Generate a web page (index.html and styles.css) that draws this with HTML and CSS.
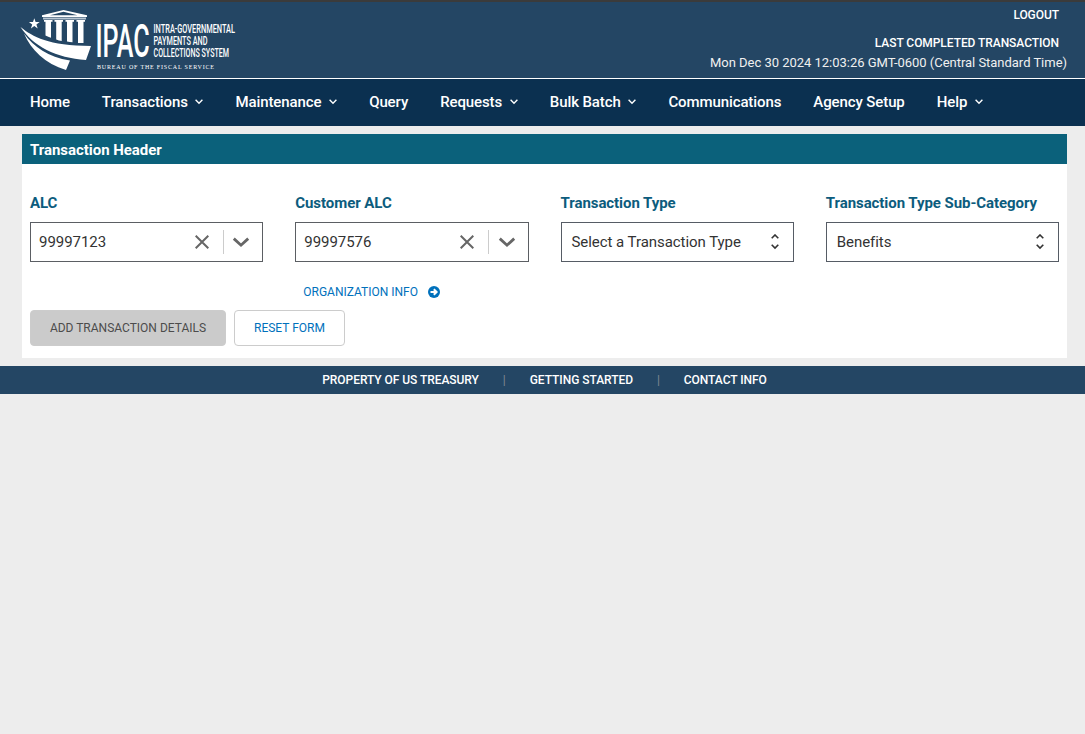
FILE: index.html
```html
<!DOCTYPE html>
<html lang="en">
<head>
<meta charset="utf-8">
<title>IPAC</title>
<link rel="stylesheet" href="styles.css">
</head>
<body>
<svg class="defs" width="0" height="0">
  <symbol id="caret" viewBox="0 0 8 6"><path d="M.6.8 4 4.2 7.4.8" fill="none" stroke="currentColor" stroke-width="1.4"/></symbol>
  <symbol id="close" viewBox="0 0 14 14"><path d="M.7.7l12.6 12.6M13.3.7.7 13.3" fill="none" stroke="currentColor" stroke-width="2"/></symbol>
  <symbol id="chevron" viewBox="0 0 26 20"><path d="M5.800 6.600 13 13.200l7.200-6.600" fill="none" stroke="currentColor" stroke-width="2.800"/></symbol>
  <symbol id="updown" viewBox="0 0 8 16"><path d="M.7 4.300 4 1l3.300 3.300M.7 10.700 4 14l3.300-3.300" fill="none" stroke="currentColor" stroke-width="1.600"/></symbol>
</svg>
<header class="masthead">
  <svg class="logo" width="220" height="70" viewBox="20 4 220 70" fill="#fff">
    <path d="M34.300 18.200l1.300 3.900h4.100l-3.300 2.400 1.300 4-3.400-2.400-3.400 2.400 1.300-4-3.300-2.400h4.100z"/>
    <path fill-rule="evenodd" d="M63.500 10 87 15.300V17H42v-1.700zM63.500 11.700 50 15.200h27.500z"/>
    <path fill="#b9c6d2" d="M43 17.500h43v1.900H43z"/>
    <path d="M44 20h8.500v1.700H51V37.800q-2.800-1-5.500-2.200V21.700H44zM54.500 20h8.500v1.700h-1.300V41q-2.700-.5-5.500-1.500V21.700h-1.700zM65.500 20H74v1.700h-1.500V42.200q-2.800-.1-5.500-.6V21.700h-1.500zM76.500 20H85v1.700h-1.500V43h-5.500V21.700h-1.500z"/>
    <path d="M20.500 27C33 37 48 45.500 91 46L86 60C56 58 33 46 20.500 27z"/>
    <path d="M24 33.500C34 47 48 57 70 60.500L66 70C45 63.500 31 50 24 33.500z"/>
    <text class="logo-name" x="95.500" y="56.600" textLength="54" lengthAdjust="spacingAndGlyphs">IPAC</text>
    <text class="logo-line" x="153.500" y="33.200" textLength="81.500" lengthAdjust="spacingAndGlyphs">INTRA-GOVERNMENTAL</text>
    <text class="logo-line" x="153.500" y="45" textLength="54" lengthAdjust="spacingAndGlyphs">PAYMENTS AND</text>
    <text class="logo-line" x="153.500" y="56.600" textLength="75.500" lengthAdjust="spacingAndGlyphs">COLLECTIONS SYSTEM</text>
    <text class="logo-sub" x="97" y="69" textLength="117" lengthAdjust="spacing">BUREAU OF THE FISCAL SERVICE</text>
  </svg>
  <div class="session">
    <a class="logout">LOGOUT</a>
    <span class="last">LAST COMPLETED TRANSACTION</span>
    <span class="time">Mon Dec 30 2024 12:03:26 GMT-0600 (Central Standard Time)</span>
  </div>
</header>
<nav class="nav">
  <a>Home</a>
  <a>Transactions<svg class="caret"><use href="#caret"/></svg></a>
  <a>Maintenance<svg class="caret"><use href="#caret"/></svg></a>
  <a>Query</a>
  <a>Requests<svg class="caret"><use href="#caret"/></svg></a>
  <a>Bulk Batch<svg class="caret"><use href="#caret"/></svg></a>
  <a>Communications</a>
  <a>Agency Setup</a>
  <a>Help<svg class="caret"><use href="#caret"/></svg></a>
</nav>
<main class="panel">
  <h1 class="panel-title">Transaction Header</h1>
  <div class="panel-body">
    <div class="fields">
      <div class="field">
        <label class="label">ALC</label>
        <div class="combo"><span class="value">99997123</span><svg class="close"><use href="#close"/></svg><i class="rule"></i><svg class="chevron"><use href="#chevron"/></svg></div>
      </div>
      <div class="field">
        <label class="label">Customer ALC</label>
        <div class="combo"><span class="value">99997576</span><svg class="close"><use href="#close"/></svg><i class="rule"></i><svg class="chevron"><use href="#chevron"/></svg></div>
        <a class="org">ORGANIZATION INFO
          <svg width="12" height="12" viewBox="0 0 12 12"><circle cx="6" cy="6" r="6" fill="#0071bc"/><path d="M2.500 6h5.500M5.800 3.200 8.600 6 5.800 8.800" fill="none" stroke="#fff" stroke-width="2"/></svg></a>
      </div>
      <div class="field">
        <label class="label">Transaction Type</label>
        <div class="combo select"><span class="value">Select a Transaction Type</span><svg class="updown"><use href="#updown"/></svg></div>
      </div>
      <div class="field">
        <label class="label">Transaction Type Sub-Category</label>
        <div class="combo select"><span class="value">Benefits</span><svg class="updown"><use href="#updown"/></svg></div>
      </div>
    </div>
    <div class="actions">
      <button class="btn btn-add">ADD TRANSACTION DETAILS</button>
      <button class="btn btn-reset">RESET FORM</button>
    </div>
  </div>
</main>
<footer class="footer">
  <a>PROPERTY OF US TREASURY</a><i>|</i><a>GETTING STARTED</a><i>|</i><a>CONTACT INFO</a>
</footer>
</body>
</html>
```

FILE: styles.css
```css
* { box-sizing: border-box; }
body { margin: 0; background: #ededed; font-family: Roboto, "Liberation Sans", sans-serif; color: #323a45; }
.defs { position: absolute; }
svg { flex: none; }
.masthead { height: 79px; background: #244664; border-top: 2px solid #3b3b3b; border-bottom: 1px solid #fff; display: flex; justify-content: space-between; padding: 2px 18px 0 20px; }
.logo { display: block; }
.logo-name { font: 500 46px Roboto, sans-serif; }
.logo-line { font: 500 12.2px Roboto, sans-serif; }
.logo-sub { font: 6px "Liberation Serif", serif; }
.session { display: flex; flex-direction: column; align-items: flex-end; color: #fff; font-size: 12px; font-weight: 500; letter-spacing: -.06px; }
.logout { line-height: 20px; margin: 1px 8px 8px 0; }
.last { line-height: 20px; margin-right: 8px; }
.time { line-height: 20px; font-size: 13px; font-weight: 400; color: #f0f0f0; letter-spacing: -.025px; }
.nav { height: 47px; background: #0b3050; display: flex; align-items: center; gap: 32px; padding: 0 30px 2px; color: #fff; font-size: 15px; font-weight: 500; letter-spacing: -.1px; }
.nav a { display: flex; align-items: center; white-space: nowrap; }
.caret { width: 8px; height: 6px; margin-left: 7.7px; }
.panel { margin: 8px 18px 8px 22px; background: #fff; height: 224px; }
.panel-title { margin: 0; height: 30px; line-height: 32px; padding-left: 8px; background: #0b617b; color: #fff; font-size: 15px; font-weight: 700; letter-spacing: -.04px; }
.panel-body { padding: 28px 8px 12px; }
.fields { display: grid; grid-template-columns: repeat(4, 1fr); gap: 32px; height: 118px; }
.label { display: block; height: 30px; line-height: 22px; font-size: 15px; font-weight: 700; color: #0c5c7d; letter-spacing: -.06px; }
.combo { height: 40px; border: 1px solid #5b5e63; display: flex; align-items: center; padding: 0 8px; }
.value { flex: 1; font-size: 15px; line-height: 38px; color: #333; white-space: nowrap; letter-spacing: -.05px; }
.close { width: 14px; height: 14px; color: #666; margin-right: 14px; }
.rule { width: 1px; height: 24px; background: #ccc; margin-right: 4.200px; }
.chevron { width: 26px; height: 20px; color: #666; }
.select { padding: 0 14px 0 10px; border-color: #565c65; }
.updown { width: 8px; height: 16px; color: #333; }
.org { display: flex; align-items: center; gap: 10px; margin: 20px 0 0 8px; line-height: 20px; font-size: 12px; color: #0071bc; }
.actions { display: flex; gap: 8px; }
.btn { height: 36px; border: 1px solid #ccc; border-radius: 4px; padding: 0; font: 400 12px Roboto, sans-serif; }
.btn-add { width: 196px; background: #cbcbcb; color: #4c4c4c; }
.btn-reset { width: 111px; background: #fff; color: #0071bc; }
.footer { height: 28px; background: #244664; display: flex; justify-content: center; align-items: center; gap: 24px; padding-left: 4px; color: #fff; font-size: 12px; font-weight: 500; letter-spacing: -.05px; }
.footer i { color: #808890; font-style: normal; font-weight: 400; }
```
